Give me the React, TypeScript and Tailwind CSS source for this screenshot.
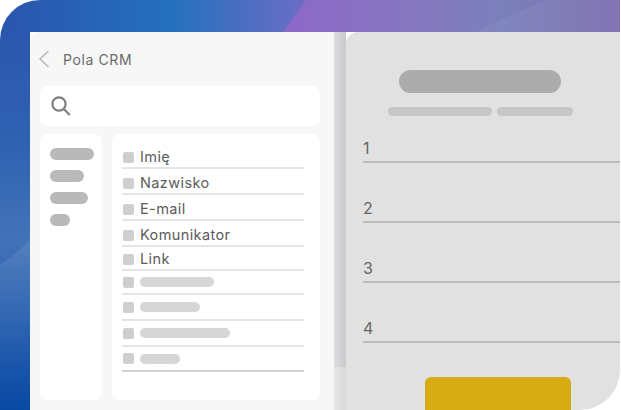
const font = "font-['Inter','Liberation_Sans',sans-serif]"

function Row({ label, bar, height, line, pad }: { label?: string; bar?: string; height: string; line?: string; pad?: string }) {
  return (
    <div className={`flex items-center gap-[6px] border-b-2 ${line ?? "border-[#e4e4e4]"} ${height} ${pad ?? ""}`}>
      <span className="ml-[1px] w-[11px] h-[11px] rounded-[2px] bg-[#cfcfcf] shrink-0" />
      {label ? (
        <span className="text-[14.5px] text-[#5c5c5c] tracking-[0.4px]">{label}</span>
      ) : (
        <span className={`h-[10px] rounded-full bg-[#d6d6d6] ${bar}`} />
      )}
    </div>
  )
}

function FieldLine({ n }: { n: number }) {
  return (
    <div className="h-[60px] flex flex-col justify-end border-b-[2px] border-[#bcbcbc]">
      <span className="text-[16px] leading-[20px] mb-[3px] text-[#666666]">{n}</span>
    </div>
  )
}

function Backdrop() {
  return (
    <svg className="absolute inset-0" width="620" height="410" viewBox="0 0 620 410">
      <defs>
        <linearGradient id="top" gradientUnits="userSpaceOnUse" x1="0" y1="0" x2="310" y2="0">
          <stop offset="0" stopColor="#2a55ad" />
          <stop offset="0.55" stopColor="#2470bd" />
          <stop offset="1" stopColor="#6e6dc6" />
        </linearGradient>
        <linearGradient id="purple" gradientUnits="userSpaceOnUse" x1="283" y1="0" x2="620" y2="0">
          <stop offset="0" stopColor="#8e68c9" />
          <stop offset="0.4" stopColor="#8577bf" />
          <stop offset="0.65" stopColor="#7a80bb" />
          <stop offset="1" stopColor="#7c6cae" />
        </linearGradient>
        <linearGradient id="side" gradientUnits="userSpaceOnUse" x1="0" y1="32" x2="0" y2="410">
          <stop offset="0" stopColor="#2b57ae" />
          <stop offset="0.3" stopColor="#3062b2" />
          <stop offset="0.55" stopColor="#4273b8" />
          <stop offset="1" stopColor="#0a4aa5" />
        </linearGradient>
        <linearGradient id="wave" gradientUnits="userSpaceOnUse" x1="0" y1="240" x2="0" y2="375">
          <stop offset="0" stopColor="#ffffff" stopOpacity="0.09" />
          <stop offset="1" stopColor="#ffffff" stopOpacity="0" />
        </linearGradient>
      </defs>
      <rect width="620" height="32" fill="url(#top)" />
      <rect y="32" width="30" height="378" fill="url(#side)" />
      <path d="M0 265Q16 254 30 240V375H0Z" fill="url(#wave)" />
      <path d="M306 0H620V32H283Z" fill="url(#purple)" />
      <path d="M545 0H620V32H475Z" fill="#ffffff" fillOpacity="0.05" />
    </svg>
  )
}

export default function App() {
  return (
    <div className={`${font} w-[621px] h-[410px] bg-white overflow-hidden`}>
      <div className="relative w-[620px] h-[410px] rounded-tl-[40px] overflow-hidden">
        <Backdrop />
        <div className="relative flex h-full pt-[32px] pl-[30px]">
          <div className="w-[304px] bg-[#f7f7f7] rounded-tl-[10px] pl-[10px] pr-[14px] flex flex-col">
            <div className="flex items-center h-[54px] gap-[13px]">
              <svg className="-ml-[2px]" width="12" height="18" viewBox="0 0 12 18" fill="none" stroke="#b9b9b9" strokeWidth="1.6">
                <path d="M10.5 1 2 9l8.5 8" />
              </svg>
              <span className="text-[14px] text-[#6a6a6a] tracking-[0.6px]">Pola CRM</span>
            </div>
            <div className="h-[40px] bg-white rounded-[8px] flex items-center pl-[10px]">
              <svg width="22" height="22" viewBox="0 0 22 22" fill="none" stroke="#7f7f7f" strokeWidth="2.2">
                <circle cx="9" cy="9" r="6.6" />
                <path d="m13.8 14 6 6" />
              </svg>
            </div>
            <div className="flex gap-[10px] mt-[8px] h-[266px]">
              <div className="w-[62px] bg-white rounded-[8px] pt-[14px] pl-[10px] flex flex-col gap-[10px]">
                <span className="h-[12px] w-[44px] rounded-full bg-[#b9b9b9]" />
                <span className="h-[12px] w-[34px] rounded-full bg-[#b9b9b9]" />
                <span className="h-[12px] w-[38px] rounded-full bg-[#b9b9b9]" />
                <span className="h-[12px] w-[20px] rounded-full bg-[#b9b9b9]" />
              </div>
              <div className="w-[208px] bg-white rounded-[8px] pt-[9px] pl-[10px] pr-[16px]">
                <Row label="Imię" height="h-[26px]" pad="pt-[4px]" />
                <Row label="Nazwisko" height="h-[26px]" pad="pt-[4px]" />
                <Row label="E-mail" height="h-[26px]" pad="pt-[4px]" />
                <Row label="Komunikator" height="h-[26px]" pad="pt-[4px]" />
                <Row label="Link" height="h-[24px]" pad="pt-[2px]" />
                <Row bar="w-[74px]" height="h-[24px]" />
                <Row bar="w-[60px]" height="h-[26px]" />
                <Row bar="w-[90px]" height="h-[26px]" />
                <Row bar="w-[40px]" height="h-[25px]" line="border-[#d2d2d2]" />
              </div>
            </div>
          </div>
          <div className="w-[12px] flex flex-col">
            <div className="h-[335px] bg-[linear-gradient(90deg,#dcdcde,#c9c9cc)]" />
            <div className="flex-1 bg-[linear-gradient(90deg,#e6e6e6,#d8d8da)]" />
          </div>
          <div className="w-[274px] bg-white">
            <div className="h-full bg-[#e1e1e1] rounded-tl-[12px] rounded-br-[40px] pl-[17px] flex flex-col">
              <div className="flex flex-col items-center pt-[38px] pr-[23px]">
                <span className="h-[23px] w-[162px] rounded-full bg-[#acacac]" />
                <div className="flex gap-[5px] mt-[14px]">
                  <span className="h-[9px] w-[104px] rounded-full bg-[#c6c6c6]" />
                  <span className="h-[9px] w-[76px] rounded-full bg-[#c6c6c6]" />
                </div>
              </div>
              <div className="-mt-[13px]">
                <FieldLine n={1} />
                <FieldLine n={2} />
                <FieldLine n={3} />
                <FieldLine n={4} />
              </div>
              <div className="mt-[34px] ml-[62px] w-[146px] flex-1 bg-[#d6ab14] rounded-t-[6px]" />
            </div>
          </div>
        </div>
      </div>
    </div>
  )
}
